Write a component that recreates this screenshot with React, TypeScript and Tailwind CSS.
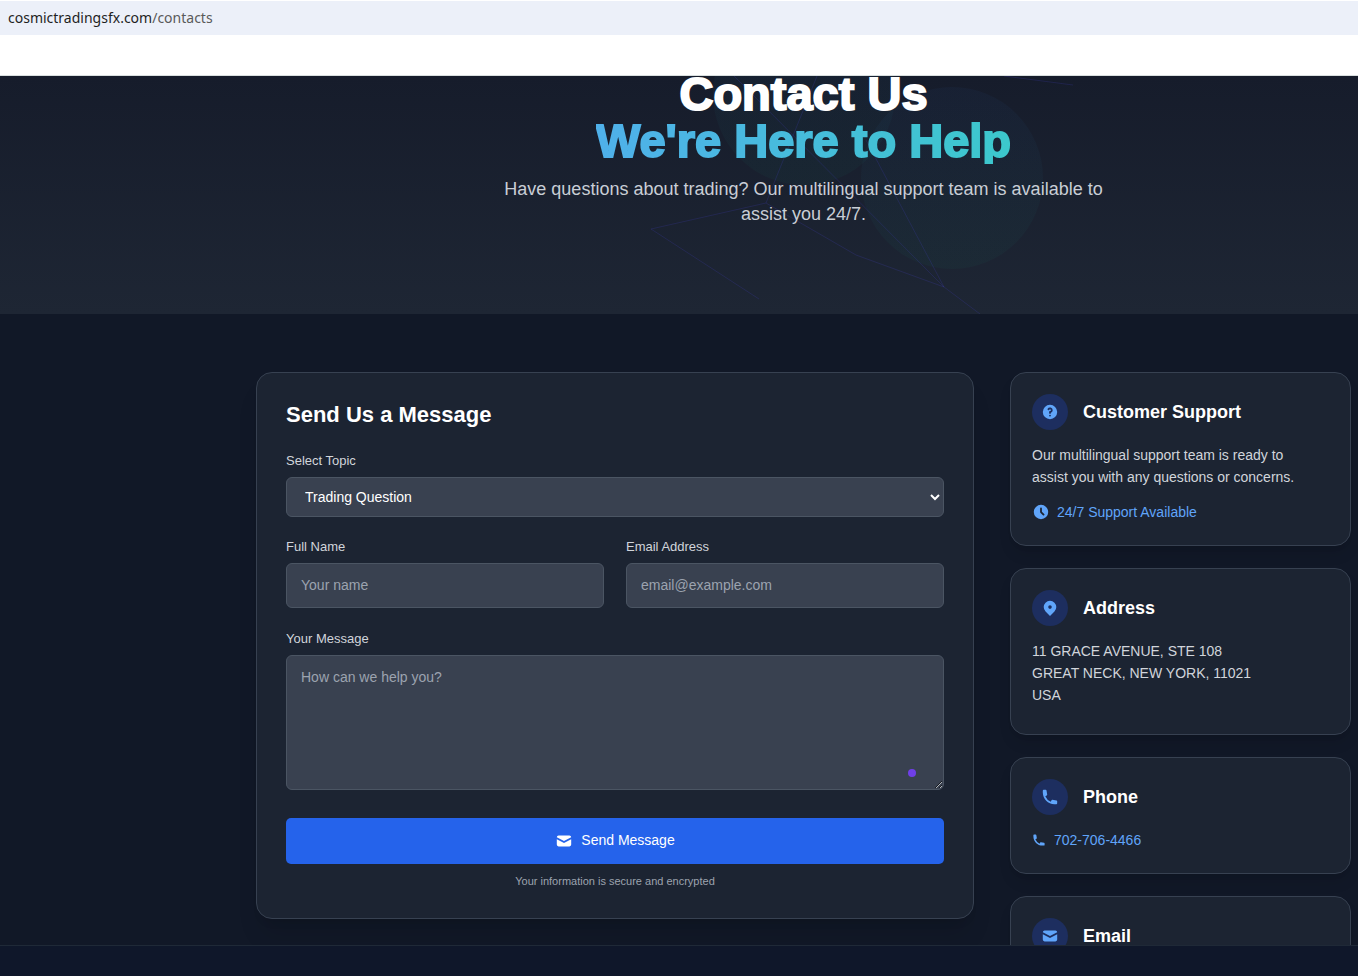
import React from "react";
import { HiClock, HiLocationMarker, HiMail, HiPhone, HiQuestionMarkCircle } from "react-icons/hi";

const fieldClass =
  "w-full rounded-md border border-[#4b5563] bg-[#394150] text-white placeholder:text-[#9ca3af]";

function Field({ id, label, children }: { id: string; label: string; children: React.ReactNode }) {
  return (
    <div className="flex flex-col gap-2">
      <label htmlFor={id} className="text-[13px] leading-4 font-medium text-[#d1d5db]">
        {label}
      </label>
      {children}
    </div>
  );
}

function InfoCard({ icon, title, children }: { icon: React.ReactNode; title: string; children?: React.ReactNode }) {
  return (
    <section className="rounded-2xl border border-[#374151] bg-[#1c2432] px-[21px] pt-[21px] pb-[22px] shadow-lg">
      <div className="mb-[14px] flex items-center gap-[15px]">
        <span className="flex size-9 items-center justify-center rounded-full bg-[#1d2e5f] text-[#60a5fa]">{icon}</span>
        <h3 className="text-[18px] leading-6 font-bold text-white">{title}</h3>
      </div>
      {children}
    </section>
  );
}

function HeroPattern() {
  return (
    <svg
      className="absolute top-0 left-1/2 h-full w-[1358px] -translate-x-1/2"
      viewBox="0 76 1358 238"
      fill="none"
      aria-hidden="true"
    >
      <defs>
        <linearGradient id="orb" x1="0" y1="0" x2="0" y2="1">
          <stop offset="0" stopColor="#3b82f6" stopOpacity="0.04" />
          <stop offset="1" stopColor="#10b981" stopOpacity="0.04" />
        </linearGradient>
      </defs>
      <circle cx="804" cy="94" r="91" fill="url(#orb)" />
      <circle cx="952" cy="178" r="91" fill="url(#orb)" />
      <g stroke="#4f46e5" strokeOpacity="0.17">
        <path d="M759 299 651 229 766 203 856 255 944 287 980 314" />
        <path d="M766 203 817 76M734 76 944 287 866 140M1004 76 1073 85" />
      </g>
    </svg>
  );
}

export default function App() {
  return (
    <div className="flex h-screen flex-col overflow-hidden bg-[#111827] font-['Liberation_Sans',Arial,sans-serif]">
      <header className="h-[76px] shrink-0 border-b border-[#d9dfdf] bg-white pt-px">
        <div className="flex h-[34px] items-center bg-[#ecf0f9] px-2 pb-[2px] font-['Noto_Sans',sans-serif] text-[14px] text-[#1f1f1f]">
          <span>cosmictradingsfx.com</span>
          <span className="text-[#5a5a5a]">/contacts</span>
        </div>
      </header>

      <main className="min-h-0 flex-1 overflow-hidden">
        <section className="relative h-[238px] overflow-hidden bg-linear-to-b from-[#161c2b] to-[#1e2634]">
          <HeroPattern />
          <div className="relative pr-[7px] pl-64 text-center">
            <h1 className="-mt-[6px] text-[47px] leading-[47px] font-black text-white [-webkit-text-stroke:2px_white]">
              <span className="block">Contact Us</span>
              <span className="mx-auto block w-fit bg-linear-to-r from-[#4fb0ea] to-[#3cc8cc] bg-clip-text text-transparent [-webkit-text-stroke:2px_transparent]">
                We're Here to Help
              </span>
            </h1>
            <p className="mx-auto mt-[13px] max-w-[605px] text-[18px] leading-[25px] text-[#c9ced6]">
              Have questions about trading? Our multilingual support team is available to assist you 24/7.
            </p>
          </div>
        </section>

        <div className="flex items-start gap-9 pt-[58px] pr-[7px] pl-64">
          <section className="flex-1 rounded-2xl border border-[#374151] bg-[#1c2432] px-[29px] pt-7 pb-[29px] shadow-xl">
            <h2 className="mb-6 text-[22px] leading-7 font-bold text-white">Send Us a Message</h2>
            <form className="flex flex-col" onSubmit={(e) => e.preventDefault()}>
              <Field id="topic" label="Select Topic">
                <select id="topic" className={`${fieldClass} h-10 px-[14px] text-[14px]`}>
                  <option>Trading Question</option>
                </select>
              </Field>
              <div className="mt-[22px] grid grid-cols-2 gap-[22px]">
                <Field id="name" label="Full Name">
                  <input id="name" type="text" placeholder="Your name" className={`${fieldClass} h-[45px] px-[14px] pb-[2px] text-[14px]`} />
                </Field>
                <Field id="email" label="Email Address">
                  <input id="email" type="email" placeholder="email@example.com" className={`${fieldClass} h-[45px] px-[14px] pb-[2px] text-[14px]`} />
                </Field>
              </div>
              <div className="relative mt-[23px]">
                <Field id="message" label="Your Message">
                  <textarea
                    id="message"
                    placeholder="How can we help you?"
                    className={`${fieldClass} block h-[135px] resize-y px-[14px] py-[11px] text-[14px] leading-5`}
                  />
                </Field>
                <span className="absolute right-7 bottom-[13px] size-2 rounded-full bg-[#6f3fe8]" />
              </div>
              <button
                type="submit"
                className="mt-7 flex h-[46px] items-center justify-center gap-2 rounded-[5px] bg-[#2563eb] pb-px text-[14px] font-medium text-white"
              >
                <HiMail className="size-[18px]" />
                Send Message
              </button>
            </form>
            <p className="mt-[9px] text-center text-[11px] leading-4 text-[#9ca3af]">
              Your information is secure and encrypted
            </p>
          </section>

          <aside className="flex w-[341px] flex-col gap-[22px] text-[14px] leading-[22px] text-[#d1d5db]">
            <InfoCard icon={<HiQuestionMarkCircle className="size-[18px]" />} title="Customer Support">
              <p>
                Our multilingual support team is ready to
                <br />
                assist you with any questions or concerns.
              </p>
              <p className="mt-[13px] flex items-center gap-[7px] text-[#60a5fa]">
                <HiClock className="size-[18px]" />
                24/7 Support Available
              </p>
            </InfoCard>
            <InfoCard icon={<HiLocationMarker className="size-[18px]" />} title="Address">
              <address className="mb-[6px] not-italic">
                11 GRACE AVENUE, STE 108
                <br />
                GREAT NECK, NEW YORK, 11021
                <br />
                USA
              </address>
            </InfoCard>
            <InfoCard icon={<HiPhone className="size-[18px]" />} title="Phone">
              <a href="tel:702-706-4466" className="flex items-center gap-2 text-[#60a5fa]">
                <HiPhone className="size-[14px]" />
                702-706-4466
              </a>
            </InfoCard>
            <InfoCard icon={<HiMail className="size-[18px]" />} title="Email" />
          </aside>
        </div>
      </main>

      <footer className="relative h-[31px] shrink-0 border-t border-[#1f2937] bg-[#0f172a]" />
    </div>
  );
}
